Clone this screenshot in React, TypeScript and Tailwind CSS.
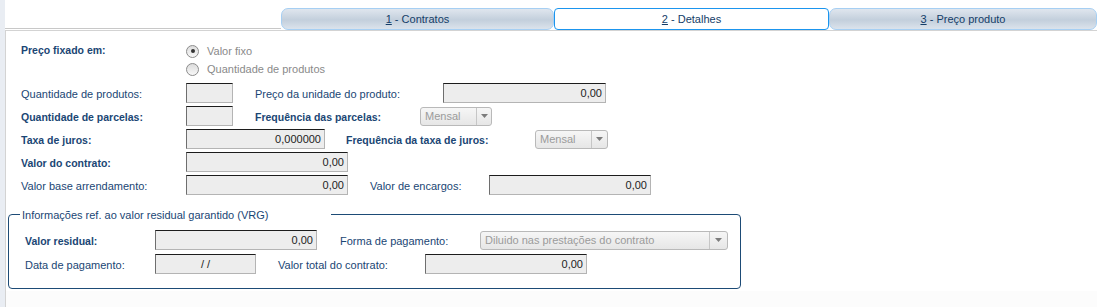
import React from "react";

const LBL = "text-[11px] text-[#1a4674] whitespace-nowrap";
const BLBL = "text-[10.5px] font-bold text-[#1a4674] whitespace-nowrap";

function Field({ w, value = "", center = false }: { w: string; value?: string; center?: boolean }) {
  return (
    <div
      className={`${w} h-[20px] shrink-0 bg-[#ededed] border border-t-[#1c1c1c] border-l-[#6e6e6e] border-r-[#b4b4b4] border-b-[#b4b4b4] flex items-center ${
        center ? "justify-center" : "justify-end pr-[3px]"
      } text-[11px] text-[#222]`}
    >
      {value}
    </div>
  );
}

function Select({ w, value, arrowW }: { w: string; value: string; arrowW: string }) {
  return (
    <div
      className={`${w} h-[19px] shrink-0 rounded-[3px] border border-[#b9b9b9] bg-[linear-gradient(to_bottom,#f6f6f6,#e6e6e6)] flex items-stretch text-[11px] text-[#9b9b9b]`}
    >
      <div className="flex-1 flex items-center pl-[4px] overflow-hidden whitespace-nowrap">{value}</div>
      <div className={`${arrowW} border-l border-[#c6c6c6] flex items-center justify-center`}>
        <svg width="7" height="4" viewBox="0 0 7 4">
          <path d="M0 0h7L3.5 4z" fill="#7c7c7c" />
        </svg>
      </div>
    </div>
  );
}

function Radio({ checked, label }: { checked?: boolean; label: string }) {
  return (
    <div className="h-[18px] flex items-center">
      <div className="w-[13px] h-[13px] rounded-full border border-[#8c8c8c] bg-[linear-gradient(to_bottom,#dcdcdc,#f8f8f8)] flex items-center justify-center">
        {checked && <div className="w-[4px] h-[4px] rounded-full bg-[#333]" />}
      </div>
      <span className="ml-[8px] text-[11px] text-[#8a8a8a]">{label}</span>
    </div>
  );
}

function Tab({ n, label, active, w }: { n: string; label: string; active?: boolean; w: string }) {
  return (
    <div
      className={`${w} h-[22px] flex items-center justify-center text-[11px] text-[#143d68] ${
        active
          ? "bg-white border border-[#1b95ee] rounded-[4px]"
          : "border border-[#a6cff3] rounded-[7px] bg-[linear-gradient(to_bottom,#dfe6ee,#c3cfdc_55%,#dbe3ec)]"
      }`}
    >
      <span className="underline">{n}</span>
      <span>&nbsp;- {label}</span>
    </div>
  );
}

export default function App() {
  return (
    <div className="w-[1097px] h-[307px] flex bg-white font-['Liberation_Sans',Arial,sans-serif] overflow-hidden">
      <div className="w-[5px] shrink-0 bg-[#e9edf3]" />
      <div className="flex-1 flex flex-col">
        {/* tabs */}
        <div className="flex h-[30px] shrink-0">
          <div className="w-[276px] h-[29px] border-b border-[#c8c8c8]" />
          <div className="flex pt-[8px]">
            <Tab n="1" label="Contratos" w="w-[273px]" />
            <Tab n="2" label="Detalhes" w="w-[275px]" active />
            <Tab n="3" label="Preço produto" w="w-[268px]" />
          </div>
        </div>

        {/* panel */}
        <div className="flex-1 flex flex-col border-t border-l border-[#d3d3d3]">
          <div className="pl-[15px] pt-[11px]">
            <div className="flex">
              <div className="w-[165px] h-[18px] flex items-center">
                <span className={BLBL}>Preço fixado em:</span>
              </div>
              <div className="flex flex-col">
                <Radio checked label="Valor fixo" />
                <Radio label="Quantidade de produtos" />
              </div>
            </div>

            <div className="flex flex-col gap-[3px] mt-[5px]">
              <div className="flex items-center h-[20px]">
                <div className="w-[165px]"><span className={LBL}>Quantidade de produtos:</span></div>
                <Field w="w-[47px]" />
                <div className="w-[188px] ml-[22px]"><span className={LBL}>Preço da unidade do produto:</span></div>
                <Field w="w-[163px]" value="0,00" />
              </div>
              <div className="flex items-center h-[20px]">
                <div className="w-[165px]"><span className={BLBL}>Quantidade de parcelas:</span></div>
                <Field w="w-[47px]" />
                <div className="w-[165px] ml-[22px]"><span className={BLBL}>Frequência das parcelas:</span></div>
                <Select w="w-[72px]" value="Mensal" arrowW="w-[15px]" />
              </div>
              <div className="flex items-center h-[20px]">
                <div className="w-[165px]"><span className={BLBL}>Taxa de juros:</span></div>
                <Field w="w-[139px]" value="0,000000" />
                <div className="w-[189px] ml-[21px]"><span className={BLBL}>Frequência da taxa de juros:</span></div>
                <Select w="w-[73px]" value="Mensal" arrowW="w-[16px]" />
              </div>
              <div className="flex items-center h-[20px]">
                <div className="w-[165px]"><span className={BLBL}>Valor do contrato:</span></div>
                <Field w="w-[162px]" value="0,00" />
              </div>
              <div className="flex items-center h-[20px]">
                <div className="w-[165px]"><span className={LBL}>Valor base arrendamento:</span></div>
                <Field w="w-[162px]" value="0,00" />
                <div className="w-[119px] ml-[22px]"><span className={LBL}>Valor de encargos:</span></div>
                <Field w="w-[162px]" value="0,00" />
              </div>
            </div>
          </div>

          <fieldset className="ml-[2px] mt-[12px] w-[733px] border border-[#1d4b76] rounded-[4px] pl-[16px] pb-[14px]">
            <legend className="ml-[-5px] w-[311px] pl-[2px] text-[11px] leading-[14px] text-[#1a4674] whitespace-nowrap">
              <span className="inline-block translate-y-[1px]">Informações ref. ao valor residual garantido (VRG)</span>
            </legend>
            <div className="flex flex-col gap-[4px] pt-[9px]">
              <div className="flex items-center h-[20px]">
                <div className="w-[130px]"><span className={BLBL}>Valor residual:</span></div>
                <Field w="w-[162px]" value="0,00" />
                <div className="w-[140px] ml-[23px]"><span className={LBL}>Forma de pagamento:</span></div>
                <Select w="w-[248px]" value="Diluido nas prestações do contrato" arrowW="w-[18px]" />
              </div>
              <div className="flex items-center h-[20px]">
                <div className="w-[130px]"><span className={LBL}>Data de pagamento:</span></div>
                <Field w="w-[101px]" value="/ /" center />
                <div className="w-[147px] ml-[22px]"><span className={LBL}>Valor total do contrato:</span></div>
                <Field w="w-[162px]" value="0,00" />
              </div>
            </div>
          </fieldset>
          <div className="flex-1 mt-[2px] bg-[#fcfcfc]" />
        </div>
      </div>
    </div>
  );
}
